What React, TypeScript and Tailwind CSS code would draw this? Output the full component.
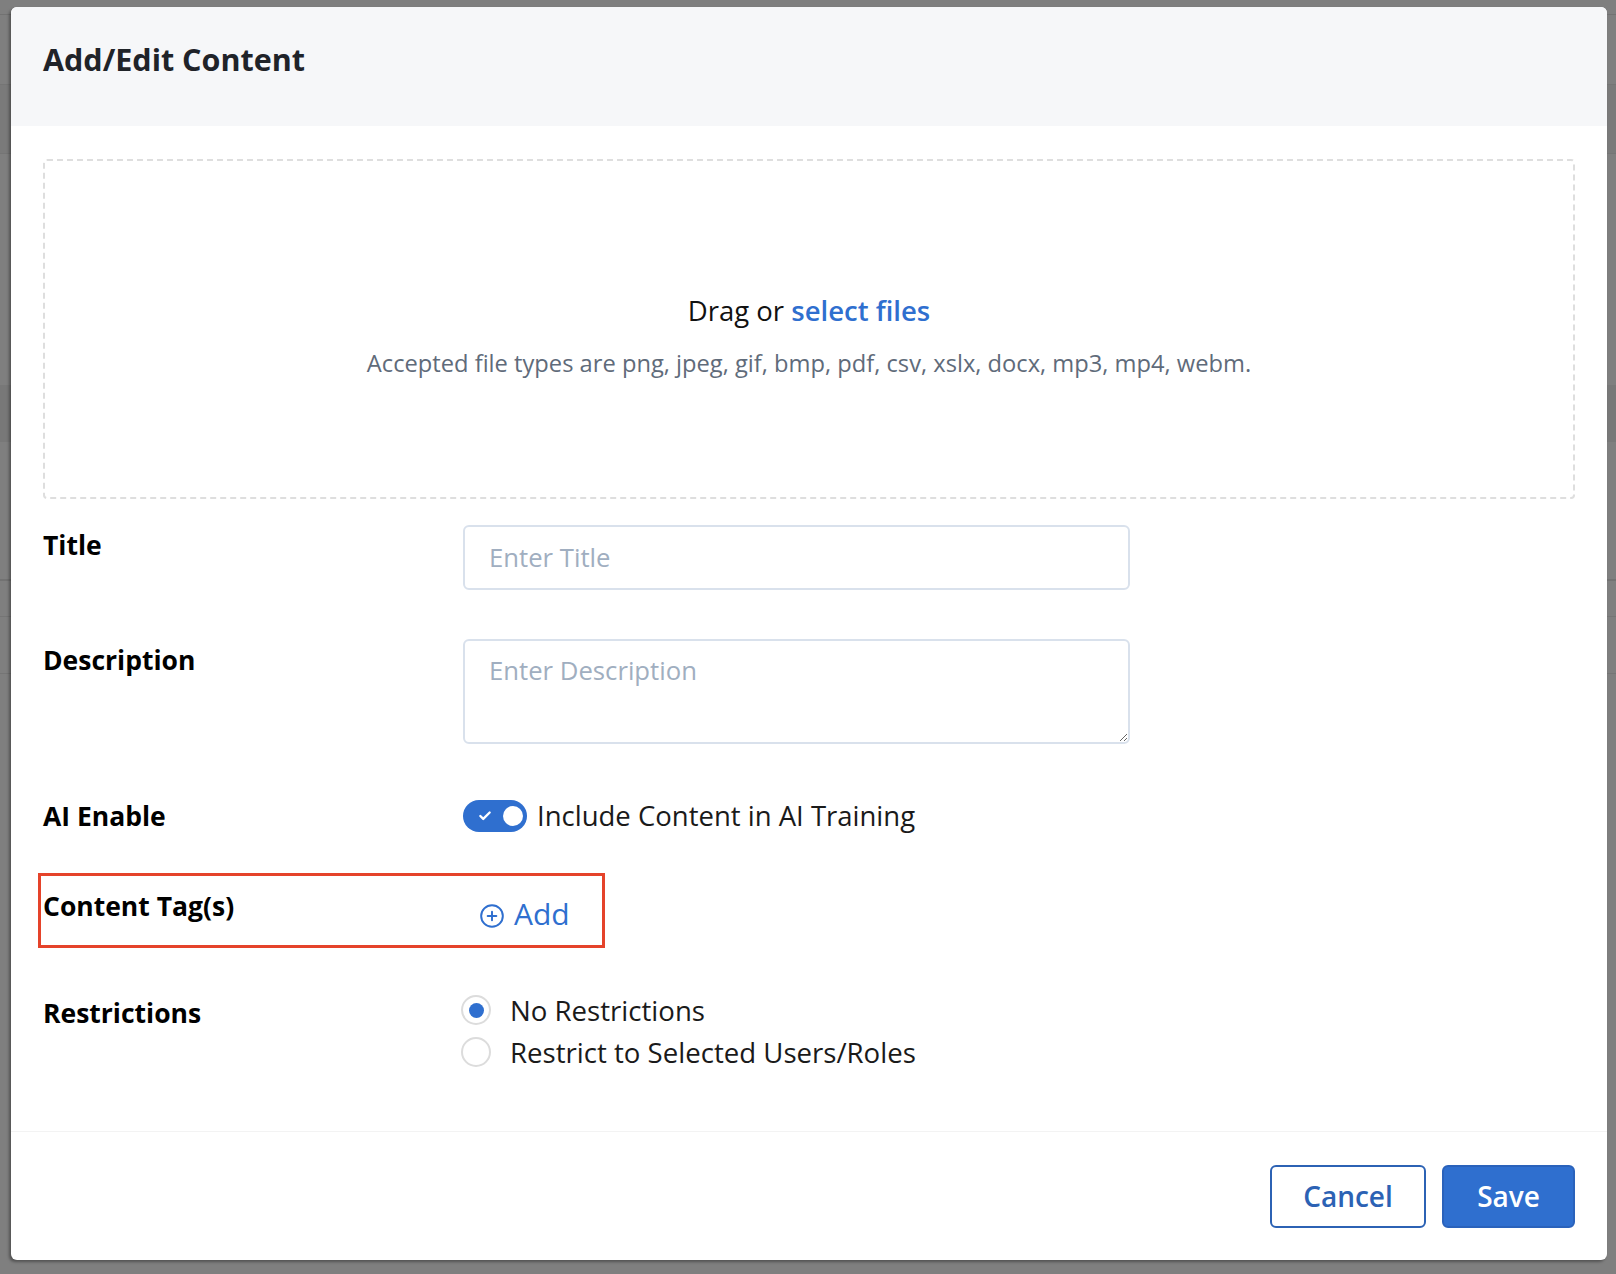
import { Check, CirclePlus } from 'lucide-react';
import { useState } from 'react';

const font = { fontFamily: '"Open Sans", Lato, sans-serif' };

const FieldLabel = ({ children, className = '' }: { children: React.ReactNode; className?: string }) => (
  <div className={`w-[420px] shrink-0 text-[26.5px] leading-8 font-bold text-black ${className}`}>{children}</div>
);

export default function App() {
  const [aiEnabled, setAiEnabled] = useState(true);
  const [restriction, setRestriction] = useState<'none' | 'selected'>('none');

  return (
    <div className="relative w-[1616px] h-[1274px] overflow-hidden bg-[#7f7f7f]" style={font}>
      {/* page behind the overlay */}
      <div className="flex flex-col">
        <div className="h-[15px] border-b border-[#727272]" />
        <div className="h-[70px] border-b border-[#757575]" />
        <div className="h-[69px] border-b border-[#757575] bg-[#7a7a7a]" />
        <div className="h-[231px]" />
        <div className="h-[57px] bg-[#787878]" />
        <div className="h-[139px] border-b-2 border-[#727272]" />
        <div className="h-[36px] border-b border-[#757575]" />
        <div className="h-[57px] border-b border-[#757575]" />
      </div>

      <div className="absolute left-[11px] top-[7px] w-[1596px] h-[1253px] flex flex-col rounded-md bg-white shadow-[-2px_2px_3px_rgba(0,0,0,0.35)] overflow-hidden">
        <div className="h-[119px] shrink-0 bg-[#f6f7f9] px-8 pt-[34px]">
          <h2 className="text-[30.5px] leading-9 font-bold text-[#1f2329]">Add/Edit Content</h2>
        </div>

        <div className="flex-1 px-8 pt-[33px]">
          <div className="h-[340px] flex flex-col items-center justify-center gap-[22px] pt-[14px] rounded border-2 border-dashed border-[#dedede]">
            <p className="text-[27.5px] leading-8 text-[#111]">
              Drag or <span className="font-semibold text-[#2f6fcf] cursor-pointer">select files</span>
            </p>
            <p className="text-[23.7px] leading-7 text-[#5f6b7a]">
              Accepted file types are png, jpeg, gif, bmp, pdf, csv, xslx, docx, mp3, mp4, webm.
            </p>
          </div>

          <div className="flex mt-[26px]">
            <FieldLabel className="pt-1">Title</FieldLabel>
            <input
              placeholder="Enter Title"
              className="w-[667px] h-[65px] px-6 rounded-md border-2 border-[#d9e1ec] text-[25.7px] text-[#1a1a1a] placeholder:text-[#a0aec0] outline-none"
            />
          </div>

          <div className="flex mt-[49px]">
            <FieldLabel className="pt-[5px]">Description</FieldLabel>
            <textarea
              placeholder="Enter Description"
              className="w-[667px] h-[105px] px-6 pt-[14px] pb-2 rounded-md border-2 border-[#d9e1ec] text-[25.7px] leading-8 text-[#1a1a1a] placeholder:text-[#a0aec0] outline-none"
            />
          </div>

          <div className="flex items-center mt-[56px]">
            <FieldLabel>AI Enable</FieldLabel>
            <button
              onClick={() => setAiEnabled((prev) => !prev)}
              className={`relative w-[64px] h-[32px] rounded-full cursor-pointer ${
                aiEnabled ? 'bg-[#2f6fcf]' : 'bg-gray-300'
              }`}
            >
              {aiEnabled && <Check className="absolute left-[15px] top-[9px] size-[14px] text-white" strokeWidth={4} />}
              <span
                className={`absolute top-[6px] size-[20px] rounded-full bg-white ${aiEnabled ? 'left-[40px]' : 'left-[6px]'}`}
              />
            </button>
            <span className="ml-[10px] text-[27.5px] leading-8 text-[#1a1a1a]">Include Content in AI Training</span>
          </div>

          <div className="relative flex mt-[58px]">
            <div className="absolute -left-[5px] -top-[17px] w-[567px] h-[75px] border-[3px] border-[#e5432a] pointer-events-none" />
            <FieldLabel>Content Tag(s)</FieldLabel>
            <button className="flex items-center gap-[9px] mt-[8px] ml-[16px] text-[#2f6fcf] cursor-pointer">
              <CirclePlus className="size-[26px] mt-[4px]" strokeWidth={1.8} />
              <span className="text-[30px] leading-8">Add</span>
            </button>
          </div>

          <div className="flex mt-[64px]">
            <FieldLabel className="pt-[3px]">Restrictions</FieldLabel>
            <div className="flex flex-col gap-[10px] -ml-[2px]">
              {[
                { key: 'none' as const, label: 'No Restrictions' },
                { key: 'selected' as const, label: 'Restrict to Selected Users/Roles' },
              ].map((opt) => (
                <label key={opt.key} className="flex items-center gap-[19px] cursor-pointer">
                  <span className="flex items-center justify-center size-[30px] rounded-full border-2 border-[#dcdcdc] bg-white">
                    {restriction === opt.key && <span className="size-[15px] rounded-full bg-[#2f6fcf]" />}
                  </span>
                  <input
                    type="radio"
                    className="hidden"
                    checked={restriction === opt.key}
                    onChange={() => setRestriction(opt.key)}
                  />
                  <span className="text-[27.6px] leading-8 text-[#1a1a1a]">{opt.label}</span>
                </label>
              ))}
            </div>
          </div>
        </div>

        <div className="h-[129px] shrink-0 flex items-center justify-end gap-4 px-8 border-t border-[#f3f3f3]">
          <button className="w-[156px] h-[63px] rounded-md border-2 border-[#2c62b4] bg-white text-[28px] font-semibold text-[#2c62b4] cursor-pointer">
            Cancel
          </button>
          <button className="w-[133px] h-[63px] rounded-md border-2 border-[#2a62bb] bg-[#2f6fcf] text-[28px] font-semibold text-white cursor-pointer">
            Save
          </button>
        </div>
      </div>
    </div>
  );
}
